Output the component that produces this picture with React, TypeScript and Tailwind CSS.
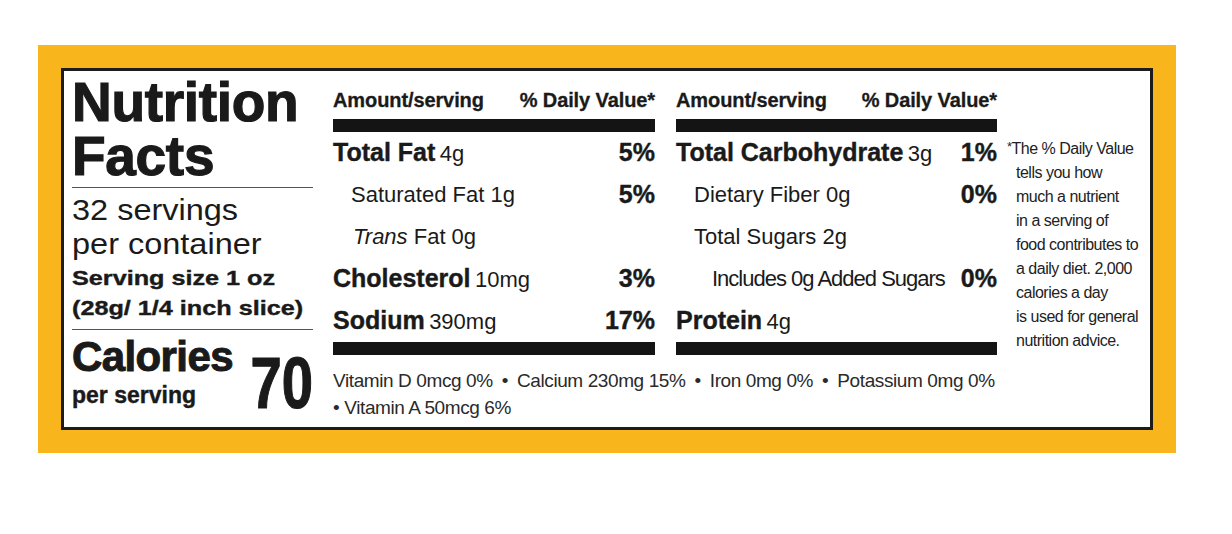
import React from "react";

const F = "font-['Liberation_Sans',Arial,sans-serif]";

type RowProps = {
  children: React.ReactNode;
  pct?: string;
  indent?: number;
  border?: boolean;
  lineIndent?: number;
};

function Row({ children, pct, indent = 0, border = true, lineIndent = 0 }: RowProps) {
  return (
    <div className="h-[42px] flex flex-col">
      <div
        className="flex-1 flex justify-between leading-[41px] whitespace-nowrap"
        style={{ paddingLeft: indent }}
      >
        <div>{children}</div>
        {pct ? (
          <div className="font-bold text-[25px] [-webkit-text-stroke:0.4px_#1a1a1a]">{pct}</div>
        ) : null}
      </div>
      {border ? (
        <div className="h-px bg-[#6a6a6a]" style={{ marginLeft: lineIndent }} />
      ) : (
        <div className="h-px" />
      )}
    </div>
  );
}

const B = ({ children }: { children: React.ReactNode }) => (
  <span className="font-bold text-[25px] [-webkit-text-stroke:0.4px_#1a1a1a]">{children}</span>
);
const R = ({ children, tight }: { children: React.ReactNode; tight?: boolean }) => (
  <span className={tight ? "text-[22px] tracking-[-1px]" : "text-[22px]"}>{children}</span>
);

function Header() {
  return (
    <>
      <div className="flex justify-between font-bold text-[20px] leading-[24px] tracking-[-0.1px] whitespace-nowrap [-webkit-text-stroke:0.3px_#1a1a1a]">
        <span>Amount/serving</span>
        <span>% Daily Value*</span>
      </div>
      <div className="mt-[7px] h-[13px] bg-[#141414]" />
    </>
  );
}

export default function App() {
  return (
    <div className={`w-[1232px] h-[534px] bg-white pt-[45px] pl-[38px] ${F} text-[#1a1a1a]`}>
      <div className="w-[1138px] h-[408px] bg-[#f9b51c] p-[23px]">
        <div className="w-full h-full border-[3px] border-[#1c1c1c] bg-white flex">
          {/* Left panel */}
          <div className="ml-[8px] w-[241px] pt-[4px]">
            <div className="font-bold text-[55px] leading-[54px] tracking-[-0.3px] [-webkit-text-stroke:1.2px_#1a1a1a]">
              <div>Nutrition</div>
              <div>Facts</div>
            </div>
            <div className="mt-[4px] h-px bg-[#555]" />
            <div className="mt-[5px] text-[29px] leading-[34px] whitespace-nowrap scale-x-[1.12] origin-left">
              <div>32 servings</div>
              <div>per container</div>
            </div>
            <div className="mt-[2px] font-bold text-[21px] leading-[30px] whitespace-nowrap scale-x-[1.2] origin-left [-webkit-text-stroke:0.4px_#1a1a1a]">
              <div>Serving size 1 oz</div>
              <div>(28g/ 1/4 inch slice)</div>
            </div>
            <div className="mt-[6px] h-px bg-[#555]" />
            <div className="flex justify-between">
              <div className="pt-[5px]">
                <div className="font-bold text-[42px] leading-[44px] tracking-[-0.6px] [-webkit-text-stroke:1px_#1a1a1a]">
                  Calories
                </div>
                <div className="font-bold text-[23px] leading-[26px] mt-[3px] [-webkit-text-stroke:0.4px_#1a1a1a]">
                  per serving
                </div>
              </div>
              <div className="font-bold text-[72px] leading-[72px] mt-[17px] scale-x-[0.78] origin-right [-webkit-text-stroke:1.2px_#1a1a1a]">
                70
              </div>
            </div>
          </div>

          {/* Middle */}
          <div className="ml-[20px] w-[664px] pt-[17px]">
            <div className="flex gap-[21px]">
              <div className="w-[322px]">
                <Header />
                <Row pct="5%">
                  <B>Total Fat</B> <R>4g</R>
                </Row>
                <Row pct="5%" indent={18}>
                  <R>Saturated Fat 1g</R>
                </Row>
                <Row indent={20}>
                  <R>
                    <i>Trans</i> Fat 0g
                  </R>
                </Row>
                <Row pct="3%">
                  <B>Cholesterol</B> <R>10mg</R>
                </Row>
                <Row pct="17%" border={false}>
                  <B>Sodium</B> <R>390mg</R>
                </Row>
                <div className="h-[13px] bg-[#141414]" />
              </div>
              <div className="w-[321px]">
                <Header />
                <Row pct="1%">
                  <B>Total Carbohydrate</B> <R>3g</R>
                </Row>
                <Row pct="0%" indent={18}>
                  <R>Dietary Fiber 0g</R>
                </Row>
                <Row indent={18} lineIndent={36}>
                  <R>Total Sugars 2g</R>
                </Row>
                <Row pct="0%" indent={36}>
                  <R tight>Includes 0g Added Sugars</R>
                </Row>
                <Row border={false}>
                  <B>Protein</B> <R>4g</R>
                </Row>
                <div className="h-[13px] bg-[#141414]" />
              </div>
            </div>
            <div className="mt-[12px] text-[19px] leading-[27px] tracking-[-0.4px] text-[#2a2a2a] whitespace-nowrap">
              <div>
                Vitamin D 0mcg 0%<span className="mx-[9px]">•</span>Calcium 230mg 15%
                <span className="mx-[9px]">•</span>Iron 0mg 0%<span className="mx-[9px]">•</span>Potassium 0mg 0%
              </div>
              <div>
                <span className="mr-[5px]">•</span>Vitamin A 50mcg 6%
              </div>
            </div>
          </div>

          {/* Footnote */}
          <div className="ml-[10px] pt-[64px] text-[16px] leading-[24px] tracking-[-0.5px] text-[#222] whitespace-nowrap">
            <div>
              <span className="text-[13px] align-[3px]">*</span>The % Daily Value
            </div>
            <div className="pl-[9px]">tells you how</div>
            <div className="pl-[9px]">much a nutrient</div>
            <div className="pl-[9px]">in a serving of</div>
            <div className="pl-[9px]">food contributes to</div>
            <div className="pl-[9px]">a daily diet. 2,000</div>
            <div className="pl-[9px]">calories a day</div>
            <div className="pl-[9px]">is used for general</div>
            <div className="pl-[9px]">nutrition advice.</div>
          </div>
        </div>
      </div>
    </div>
  );
}
